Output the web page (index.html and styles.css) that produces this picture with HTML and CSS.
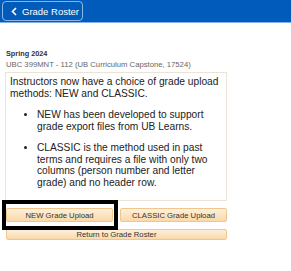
FILE: index.html
```html
<!DOCTYPE html>
<html lang="en">
<head>
  <meta charset="UTF-8">
  <meta name="viewport" content="width=device-width, initial-scale=1.0">
  <title>Grade Upload</title>
  <link rel="stylesheet" href="styles.css">
</head>
<body>

  <div class="topbar">
    <a class="back-btn" href="#">
      <svg class="chevron" width="6" height="9" viewBox="0 0 6 9">
        <path d="M5 1 L1.5 4.5 L5 8" fill="none" stroke="#fff" stroke-width="1.6"/>
      </svg>
      Grade Roster
    </a>
  </div>

  <div class="content">
    <div class="term">Spring 2024</div>
    <div class="course">UBC 399MNT - 112 (UB Curriculum Capstone, 17524)</div>

    <div class="notice">
      <p>Instructors now have a choice of grade upload methods: NEW and CLASSIC.</p>
      <ul>
        <li>NEW has been developed to support grade export files from UB Learns.</li>
        <li>CLASSIC is the method used in past terms and requires a file with only two columns (person number and letter grade) and no header row.</li>
      </ul>
    </div>

    <div class="actions">
      <div class="row">
        <button class="btn highlighted">NEW Grade Upload</button>
        <button class="btn">CLASSIC Grade Upload</button>
      </div>
      <button class="btn wide">Return to Grade Roster</button>
    </div>
  </div>

</body>
</html>
```

FILE: styles.css
```css
body {
  margin: 0;
  font-family: "Liberation Sans", Arial, sans-serif;
  background: #fff;
  color: #222;
}
.topbar {
  height: 23px;
  background: #005bbb;
  border-bottom: 1px solid #7fb2ec;
  padding: 1px 0 0 2px;
  box-sizing: border-box;
}
.back-btn {
  display: inline-flex;
  align-items: center;
  gap: 5px;
  width: 81px;
  height: 20px;
  box-sizing: border-box;
  padding-left: 8px;
  border: 1px solid rgba(255,255,255,0.55);
  border-radius: 4px;
  color: #fff;
  text-decoration: none;
  font-size: 9.5px;
}
.content {
  padding: 25px 0 0 5px;
  width: 222px;
}
.term {
  font-size: 7.3px;
  font-weight: bold;
  color: #333;
  padding-left: 1px;
  line-height: 11px;
}
.course {
  font-size: 7.7px;
  color: #666;
  padding-left: 1px;
  line-height: 11px;
  margin-bottom: 2px;
}
.notice {
  border: 1px solid #ebe3d5;
  padding: 3px 4px 4px;
  font-size: 10.2px;
  line-height: 11.5px;
  color: #222;
}
.notice p {
  margin: 0 0 10px;
}
.notice ul {
  margin: 0 0 8px;
  padding-left: 27px;
}
.notice li {
  margin-bottom: 10px;
}
.notice li:last-child {
  margin-bottom: 0;
}
.actions {
  display: flex;
  flex-direction: column;
  gap: 7px;
  margin-top: 7px;
  padding-left: 1px;
}
.row {
  display: flex;
  gap: 7px;
}
.btn {
  flex: 1;
  height: 14px;
  padding: 0;
  font-family: "Liberation Sans", Arial, sans-serif;
  font-size: 7.7px;
  color: #333;
  background: linear-gradient(#fdf0d9, #fad9a9);
  border: 1px solid #f0c58e;
  border-radius: 2px;
}
.btn.wide {
  width: 100%;
}
.highlighted {
  position: relative;
}
.highlighted::after {
  content: "";
  position: absolute;
  left: -5px;
  top: -9px;
  right: -6px;
  bottom: -9px;
  border: 4px solid #000;
}
```
